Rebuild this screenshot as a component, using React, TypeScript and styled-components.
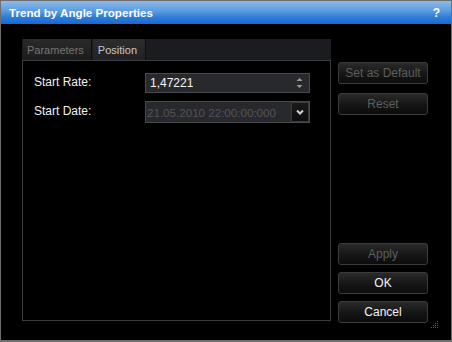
import React from "react";
import styled, { createGlobalStyle } from "styled-components";

const GlobalStyle = createGlobalStyle`
  html, body {
    margin: 0;
    padding: 0;
    background: #000;
  }
  body {
    font-family: "Liberation Sans", Arial, sans-serif;
  }
`;

const App = () => {
  const [tab, setTab] = React.useState<string>("position");

  return (
    <>
      <GlobalStyle />
      <Window>
        <TitleBar>
          <Title>Trend by Angle Properties</Title>
          <Help>?</Help>
        </TitleBar>
        <Body>
          <TabArea>
            <TabStrip>
              <Tab active={tab === "parameters"} onClick={() => setTab("parameters")}>
                Parameters
              </Tab>
              <Tab active={tab === "position"} onClick={() => setTab("position")}>
                Position
              </Tab>
            </TabStrip>
            <Panel>
              <FieldRow>
                <Label>Start Rate:</Label>
                <Input>
                  <Value>1,47221</Value>
                  <Spinner>
                    <svg width="7" height="14" viewBox="0 0 7 14">
                      <path d="M3.5 2 L6.5 5 L0.5 5 Z" fill="#9a9a9a" />
                      <path d="M0.5 9 L6.5 9 L3.5 12 Z" fill="#9a9a9a" />
                    </svg>
                  </Spinner>
                </Input>
              </FieldRow>
              <FieldRow>
                <Label>Start Date:</Label>
                <Input disabled>
                  <Value disabled>21.05.2010 22:00:00:000</Value>
                  <DropButton>
                    <svg width="8" height="6" viewBox="0 0 8 6">
                      <path d="M1 1.5 L4 4.5 L7 1.5" stroke="#d0d0d0" strokeWidth="2" fill="none" />
                    </svg>
                  </DropButton>
                </Input>
              </FieldRow>
            </Panel>
          </TabArea>
          <ButtonColumn>
            <Button disabled>Set as Default</Button>
            <Button disabled>Reset</Button>
            <Spacer />
            <Button disabled>Apply</Button>
            <Button>OK</Button>
            <Button>Cancel</Button>
          </ButtonColumn>
        </Body>
        <Grip>
          <svg width="8" height="8" viewBox="0 0 8 8">
            <rect x="6" y="0" width="1" height="1" fill="#5a5a5a" />
            <rect x="4" y="2" width="1" height="1" fill="#5a5a5a" />
            <rect x="6" y="2" width="1" height="1" fill="#5a5a5a" />
            <rect x="2" y="4" width="1" height="1" fill="#5a5a5a" />
            <rect x="4" y="4" width="1" height="1" fill="#5a5a5a" />
            <rect x="6" y="4" width="1" height="1" fill="#5a5a5a" />
            <rect x="0" y="6" width="1" height="1" fill="#5a5a5a" />
            <rect x="2" y="6" width="1" height="1" fill="#5a5a5a" />
            <rect x="4" y="6" width="1" height="1" fill="#5a5a5a" />
            <rect x="6" y="6" width="1" height="1" fill="#5a5a5a" />
          </svg>
        </Grip>
      </Window>
    </>
  );
};

const Window = styled.div`
  position: relative;
  width: 452px;
  height: 342px;
  box-sizing: border-box;
  border: 1px solid #6e6e6e;
  border-bottom-width: 2px;
  background: #000;
  display: flex;
  flex-direction: column;
  overflow: hidden;
`;

const TitleBar = styled.div`
  height: 23px;
  display: flex;
  align-items: center;
  justify-content: space-between;
  padding: 0 11px 0 8px;
  background: linear-gradient(to bottom, #8dbbe8 0%, #5a9ae0 45%, #2f7cd8 70%, #1768d2 100%);
  color: #fff;
  font-weight: bold;
  font-size: 11.6px;
`;

const Title = styled.span`
  letter-spacing: 0;
`;

const Help = styled.span`
  font-size: 12px;
`;

const Body = styled.div`
  flex: 1;
  display: flex;
  align-items: flex-start;
  gap: 7px;
  padding: 15px 0 0 21px;
`;

const TabArea = styled.div`
  width: 309px;
  height: 282px;
  display: flex;
  flex-direction: column;
`;

const TabStrip = styled.div`
  height: 21px;
  display: flex;
  background: #1b1c1f;
  padding-left: 1px;
  gap: 1px;
`;

const Tab = styled.div<{ active?: boolean }>`
  height: 21px;
  box-sizing: border-box;
  padding: ${(p) => (p.active ? "0 8px 0 5px" : "0 7px 0 4px")};
  display: flex;
  align-items: center;
  font-size: 11px;
  color: ${(p) => (p.active ? "#c8c8c8" : "#767676")};
  background: ${(p) =>
    p.active
      ? "linear-gradient(to bottom, #2c2c2e, #222224)"
      : "linear-gradient(to bottom, #2a2a2a, #1c1c1c)"};
  border-right: 1px solid #0e0e0e;
  cursor: default;
`;

const Panel = styled.div`
  flex: 1;
  border: 1px solid #3c3c40;
  padding: 11px 20px 0 11px;
  display: flex;
  flex-direction: column;
  gap: 7px;
`;

const FieldRow = styled.div`
  display: flex;
  align-items: center;
  height: 22px;
`;

const Label = styled.span`
  width: 111px;
  color: #f0f0f0;
  font-size: 12px;
  margin-top: -3px;
`;

const Input = styled.div<{ disabled?: boolean }>`
  width: 165px;
  height: ${(p) => (p.disabled ? "22px" : "20px")};
  box-sizing: border-box;
  border: 1px solid #4a4a4e;
  background: #28292d;
  display: flex;
  align-items: center;
  justify-content: space-between;
`;

const Value = styled.span<{ disabled?: boolean }>`
  font-size: ${(p) => (p.disabled ? "11.6px" : "12px")};
  color: ${(p) => (p.disabled ? "#545456" : "#f4f4f4")};
  padding-left: ${(p) => (p.disabled ? "1px" : "4px")};
  white-space: nowrap;
  overflow: hidden;
`;

const Spinner = styled.span`
  display: flex;
  margin-right: 6px;
`;

const DropButton = styled.span`
  flex: none;
  width: 18px;
  height: 20px;
  box-sizing: border-box;
  border: 1px solid #3a3a3a;
  background: linear-gradient(to bottom, #1a1a1a, #0c0c0c);
  display: flex;
  align-items: center;
  justify-content: center;
`;

const ButtonColumn = styled.div`
  width: 90px;
  height: 284px;
  padding-top: 23px;
  box-sizing: border-box;
  display: flex;
  flex-direction: column;
`;

const Spacer = styled.div`
  flex: 1;
`;

const Button = styled.button<{ disabled?: boolean }>`
  width: 90px;
  height: 22px;
  box-sizing: border-box;
  border: 1px solid #3c3c3c;
  border-radius: 3px;
  background: linear-gradient(to bottom, #2a2a2a, #141414 60%, #0c0c0c);
  color: ${(p) => (p.disabled ? "#5e5e5e" : "#f4f4f4")};
  font-family: "Liberation Sans", Arial, sans-serif;
  font-size: 12px;
  padding: 0;
  margin-bottom: 7px;
  cursor: default;

  &:nth-child(1) {
    margin-bottom: 9px;
  }
  &:last-child {
    margin-bottom: 0;
  }
`;

const Grip = styled.div`
  position: absolute;
  right: 12px;
  bottom: 11px;
  display: flex;
`;

export default App;
